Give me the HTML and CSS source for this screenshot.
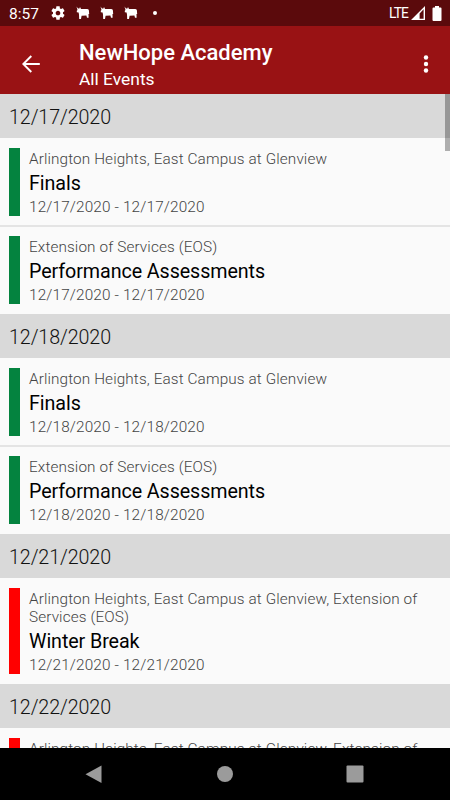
FILE: index.html
```
<!DOCTYPE html>
<html lang="en">
<head>
  <meta charset="UTF-8">
  <meta name="viewport" content="width=device-width, initial-scale=1.0">
  <title>NewHope Academy - All Events</title>
  <link rel="stylesheet" href="styles.css">
</head>
<body>
  <svg class="sprite" width="0" height="0">
    <symbol id="bull" viewBox="0 0 14 14">
      <path d="M0.500 0.500 L2 2.500 L3.400 2.500 L4 1 L5 2.900 L11.400 3 L12.800 3.800 L13.200 8 L12.500 8 L12.600 11.800 L11 11.800 L10.400 9.500 L5.600 9.700 L5 13 L3.200 13 L3 8.600 L2.600 6.400 L0.800 6.200 L0.800 4.800 L1.500 4 Z"/>
    </symbol>
  </svg>

  <div class="screen">
    <div class="status-bar">
      <span class="clock">8:57</span>
      <svg class="gear" viewBox="0 0 24 24" width="16" height="16"><path d="M19.43 12.98c.04-.32.07-.64.07-.98s-.03-.66-.07-.98l2.11-1.65c.19-.15.24-.42.12-.64l-2-3.46c-.12-.22-.39-.3-.61-.22l-2.49 1c-.52-.4-1.08-.73-1.69-.98l-.38-2.65C14.46 2.18 14.25 2 14 2h-4c-.25 0-.46.18-.49.42l-.38 2.65c-.61.25-1.17.59-1.69.98l-2.49-1c-.23-.09-.49 0-.61.22l-2 3.46c-.13.22-.07.49.12.64l2.11 1.65c-.04.32-.07.65-.07.98s.03.66.07.98l-2.11 1.65c-.19.15-.24.42-.12.64l2 3.46c.12.22.39.3.61.22l2.49-1c.52.4 1.08.73 1.69.98l.38 2.65c.03.24.24.42.49.42h4c.25 0 .46-.18.49-.42l.38-2.65c.61-.25 1.17-.59 1.69-.98l2.49 1c.23.09.49 0 .61-.22l2-3.46c.12-.22.07-.49-.12-.64l-2.11-1.65zM12 15.5c-1.93 0-3.500-1.570-3.500-3.500s1.570-3.500 3.500-3.500 3.500 1.570 3.500 3.500-1.570 3.500-3.500 3.500z"/></svg>
      <svg class="bull" width="14" height="14"><use href="#bull"/></svg>
      <svg class="bull" width="14" height="14"><use href="#bull"/></svg>
      <svg class="bull" width="14" height="14"><use href="#bull"/></svg>
      <span class="dot"></span>
      <span class="network">LTE</span>
      <svg class="signal" viewBox="0 0 14 14" width="14" height="14"><path fill-rule="evenodd" d="M14 0 V14 H0 Z M12.600 3.200 L8.600 7.400 V12.700 H12.600 Z"/></svg>
      <svg class="battery" viewBox="0 0 10 15" width="10" height="15"><path d="M3 0h4v1.500h1.500q1 0 1 1V14q0 1-1 1h-7q-1 0-1-1V2.500q0-1 1-1H3z"/></svg>
    </div>

    <header class="app-bar">
      <svg class="back" viewBox="0 0 18 18" width="18" height="18"><path d="M17.800 9H1.500M9.300 1 1.300 9l8 8"/></svg>
      <div class="titles">
        <h1>NewHope Academy</h1>
        <h2>All Events</h2>
      </div>
      <svg class="more" viewBox="0 0 6 18" width="6" height="18"><circle cx="3" cy="2.500" r="2.200"/><circle cx="3" cy="9" r="2.200"/><circle cx="3" cy="15.500" r="2.200"/></svg>
    </header>

    <main class="events">
      <div class="scrollbar"></div>

      <h3 class="date">12/17/2020</h3>
      <div class="event green">
        <div class="info">
          <p class="place">Arlington Heights, East Campus at Glenview</p>
          <p class="name">Finals</p>
          <p class="range">12/17/2020 - 12/17/2020</p>
        </div>
      </div>
      <div class="event green">
        <div class="info">
          <p class="place">Extension of Services (EOS)</p>
          <p class="name">Performance Assessments</p>
          <p class="range">12/17/2020 - 12/17/2020</p>
        </div>
      </div>

      <h3 class="date">12/18/2020</h3>
      <div class="event green">
        <div class="info">
          <p class="place">Arlington Heights, East Campus at Glenview</p>
          <p class="name">Finals</p>
          <p class="range">12/18/2020 - 12/18/2020</p>
        </div>
      </div>
      <div class="event green">
        <div class="info">
          <p class="place">Extension of Services (EOS)</p>
          <p class="name">Performance Assessments</p>
          <p class="range">12/18/2020 - 12/18/2020</p>
        </div>
      </div>

      <h3 class="date">12/21/2020</h3>
      <div class="event red">
        <div class="info">
          <p class="place">Arlington Heights, East Campus at Glenview, Extension of Services (EOS)</p>
          <p class="name">Winter Break</p>
          <p class="range">12/21/2020 - 12/21/2020</p>
        </div>
      </div>

      <h3 class="date">12/22/2020</h3>
      <div class="event red">
        <div class="info">
          <p class="place">Arlington Heights, East Campus at Glenview, Extension of</p>
        </div>
      </div>
    </main>

    <nav class="nav-bar">
      <svg viewBox="0 0 18 18" width="18" height="18"><path d="M16.500 0.500V18L0.500 9.200Z"/></svg>
      <svg viewBox="0 0 18 18" width="18" height="18"><circle cx="9" cy="9" r="8"/></svg>
      <svg viewBox="0 0 18 18" width="18" height="18"><rect x="0.500" y="0.500" width="17" height="17" rx="1"/></svg>
    </nav>
  </div>
</body>
</html>
```
FILE: styles.css
```
* {
  margin: 0;
  padding: 0;
  box-sizing: border-box;
}

body {
  font-family: Roboto, sans-serif;
  background: #000;
}

.sprite {
  display: block;
}

.screen {
  display: flex;
  flex-direction: column;
  width: 450px;
  height: 800px;
  overflow: hidden;
}

/* Status bar */
.status-bar {
  display: flex;
  align-items: center;
  flex: none;
  height: 26px;
  padding: 0 8px 0 9px;
  background: #5b0a0c;
  color: #fff;
}

.status-bar svg {
  flex: none;
  fill: #fff;
}

.clock {
  width: 41px;
  padding-top: 1px;
  font-size: 15.5px;
}

.bull {
  margin-left: 10px;
}

.dot {
  width: 4px;
  height: 4px;
  margin-left: 15px;
  border-radius: 50%;
  background: #fff;
}

.network {
  margin-left: auto;
  font-size: 13.8px;
  letter-spacing: -0.9px;
}

.signal {
  margin-left: 3px;
}

.battery {
  margin-left: 7px;
}

/* App bar */
.app-bar {
  display: flex;
  align-items: center;
  flex: none;
  height: 68px;
  padding: 7px 21px 0 22px;
  background: #991214;
  color: #fff;
}

.back {
  fill: none;
  stroke: #fff;
  stroke-width: 1.9;
}

.titles {
  flex: 1;
  margin-left: 39px;
  padding-top: 4px;
}

.titles h1 {
  font-size: 22px;
  font-weight: 500;
  line-height: 28px;
}

.titles h2 {
  font-size: 17.4px;
  font-weight: 400;
  line-height: 25px;
}

.more {
  fill: #fff;
}

/* Event list */
.events {
  position: relative;
  flex: 1;
  min-height: 0;
  overflow: hidden;
  background: #fafafa;
}

.scrollbar {
  position: absolute;
  top: 0;
  right: 0;
  width: 5px;
  height: 57px;
  background: rgba(0, 0, 0, 0.3);
}

.date {
  height: 44px;
  padding-left: 9px;
  background: #d9d9d9;
  color: #111;
  font-size: 19.7px;
  font-weight: 300;
  line-height: 47px;
  letter-spacing: -0.1px;
}

.event {
  padding: 10px 9px;
}

.event + .event {
  margin-top: -1px;
  padding-top: 9px;
  border-top: 2px solid #e4e4e4;
}

.info {
  padding-left: 9px;
  border-left: 11px solid;
}

.green .info {
  border-color: #04833f;
}

.red .info {
  border-color: #f00;
}

.place,
.range {
  color: #444;
  font-size: 15.3px;
  font-weight: 300;
  line-height: 18px;
  letter-spacing: 0.12px;
}

.place {
  padding-top: 2px;
}

.name {
  color: #000;
  font-size: 19.7px;
  font-weight: 400;
  line-height: 31px;
  letter-spacing: -0.08px;
}

.range {
  line-height: 17px;
  letter-spacing: 0.16px;
}

/* Navigation bar */
.nav-bar {
  display: flex;
  justify-content: space-between;
  align-items: center;
  flex: none;
  height: 52px;
  padding: 0 86px 0 85px;
  background: #000;
}

.nav-bar svg {
  fill: #9b9b9b;
}
```
